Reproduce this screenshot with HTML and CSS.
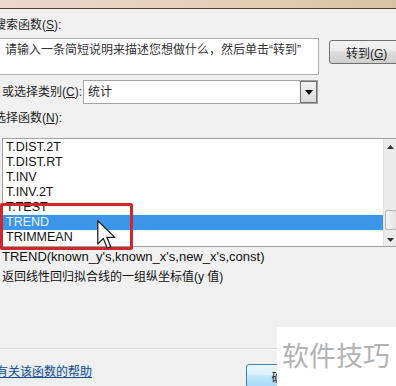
FILE: index.html
```html
<!DOCTYPE html>
<html lang="zh-CN">
<head>
  <meta charset="UTF-8">
  <title>插入函数</title>
  <link rel="stylesheet" href="styles.css">
</head>
<body>
  <div class="titlebar"></div>

  <div class="dialog">
    <label class="lbl lbl-search">搜索函数(<u>S</u>):</label>
    <div class="search-row">
      <div class="search-box">请输入一条简短说明来描述您想做什么，然后单击“转到”</div>
      <button class="btn">转到(<u>G</u>)</button>
    </div>

    <div class="cat-row">
      <label class="lbl lbl-cat">或选择类别(<u>C</u>):</label>
      <div class="select">
        <span class="select-text">统计</span>
        <span class="select-drop"><svg width="8" height="5" viewBox="0 0 8 5"><path d="M0 0H8L4 5Z" fill="#000"/></svg></span>
      </div>
    </div>

    <label class="lbl lbl-func">选择函数(<u>N</u>):</label>
    <div class="list">
      <ul class="items">
        <li>T.DIST.2T</li>
        <li>T.DIST.RT</li>
        <li>T.INV</li>
        <li>T.INV.2T</li>
        <li>T.TEST</li>
        <li class="selected">TREND</li>
        <li>TRIMMEAN</li>
      </ul>
      <div class="scrollbar">
        <svg width="7" height="4" viewBox="0 0 7 4"><path d="M0 4H7L3.5 0Z" fill="#333"/></svg>
        <div class="thumb"></div>
        <svg width="7" height="4" viewBox="0 0 7 4"><path d="M0 0H7L3.5 4Z" fill="#333"/></svg>
      </div>

      <!-- annotation over the list -->
      <div class="mark"></div>
      <svg class="cursor" width="19" height="29" viewBox="0 0 13 20">
        <path d="M0.5 0.5V16.5L4.3 12.8L7 19.3L9.4 18.3L6.8 12H12.2Z" fill="#fff" stroke="#222" stroke-width="0.9" stroke-linejoin="round"/>
      </svg>
    </div>

    <p class="syntax">TREND(known_y's,known_x's,new_x's,const)</p>
    <p class="desc">返回线性回归拟合线的一组纵坐标值(y 值)</p>

    <div class="sep"></div>

    <div class="footer">
      <a class="help" href="#">有关该函数的帮助</a>
      <div class="actions">
        <button class="btn btn-default">确定</button>
        <button class="btn">取消</button>
      </div>
    </div>
  </div>

  <div class="watermark">软件技巧</div>
</body>
</html>
```

FILE: styles.css
```css
body {
  margin: 0;
  width: 396px;
  height: 386px;
  overflow: hidden;
  position: relative;
  background-color: #f0f0f0;
  font-family: "Liberation Sans", "Noto Sans CJK SC", sans-serif;
  font-size: 12px;
  color: #1e1e1e;
}

.titlebar {
  height: 8px;
  background: linear-gradient(to right, #ead7ca, #e6cfb9 55%, #d8c2a3);
  border-bottom: 1px solid #4b4038;
}

.dialog {
  width: 410px;
  margin-left: -6px;
}

.lbl {
  display: block;
  line-height: 16px;
  white-space: nowrap;
}

.lbl-search {
  margin-top: 8px;
}

.search-row {
  display: flex;
  align-items: flex-start;
  gap: 10px;
  margin-top: 5px;
  margin-left: 5px;
}

.search-box {
  width: 311px;
  height: 31px;
  padding: 3px 3px 1px 5px;
  background-color: #fff;
  border: 1px solid #abadb3;
  line-height: 16px;
  color: #333;
  white-space: nowrap;
  overflow: hidden;
}

.btn {
  width: 75px;
  height: 24px;
  padding: 0;
  font-family: inherit;
  font-size: 12px;
  color: #1e1e1e;
  border: 1px solid #707070;
  border-radius: 3px;
  background: linear-gradient(#f2f2f2, #ebebeb 45%, #dddddd 50%, #cfcfcf);
}

.search-row .btn {
  margin-top: 2px;
}

.cat-row {
  display: flex;
  align-items: center;
  margin-top: 5px;
  margin-left: 8px;
}

.lbl-cat {
  width: 81px;
}

.select {
  display: flex;
  justify-content: space-between;
  width: 233px;
  height: 22px;
  background-color: #fff;
  border: 1px solid #a3a3a3;
}

.select-text {
  padding-left: 4px;
  line-height: 22px;
}

.select-drop {
  display: flex;
  align-items: center;
  justify-content: center;
  width: 15px;
  border: 1px solid #707070;
  background: linear-gradient(#f3f3f3, #dcdcdc);
}

.lbl-func {
  margin-top: 6px;
}

.list {
  position: relative;
  display: flex;
  width: 394px;
  height: 107px;
  margin-top: 12px;
  margin-left: 8px;
  background-color: #fff;
  border: 1px solid #a0a0a0;
}

.items {
  flex: 1;
  margin: 0;
  padding: 1px 0 0;
  list-style: none;
  font-size: 12.5px;
}

.items li {
  height: 15px;
  line-height: 15px;
  padding-left: 3px;
  color: #111;
}

.items .selected {
  background-color: #3d95ea;
  color: #eaf6ff;
}

.scrollbar {
  display: flex;
  flex-direction: column;
  align-items: center;
  width: 13px;
  padding: 6px 0 4px;
  background-color: #ebebeb;
  border-left: 1px solid #e2e2e2;
}

.thumb {
  width: 10px;
  height: 18px;
  margin: 61px 0 8px;
  border: 1px solid #b4b4b4;
  border-radius: 2px;
  background: linear-gradient(to right, #f6f6f6, #e2e2e2);
}

.mark {
  position: absolute;
  left: -3px;
  top: 64px;
  width: 127px;
  height: 41px;
  border: 3px solid #d3262b;
  border-radius: 2px;
}

.cursor {
  position: absolute;
  left: 94px;
  top: 81px;
}

.syntax,
.desc {
  margin: 0;
  margin-left: 8px;
  line-height: 20px;
  white-space: nowrap;
  color: #111;
}

.syntax {
  font-size: 13px;
}

.sep {
  height: 1px;
  margin-top: 61px;
  background-color: #d5d5d5;
  border-bottom: 1px solid #fbfbfb;
}

.footer {
  display: flex;
  justify-content: space-between;
  align-items: flex-start;
  margin-top: 14px;
}

.help {
  margin-left: 2px;
  line-height: 16px;
  color: #1f4c86;
  text-decoration: underline;
  text-shadow: 0 0 3px #b5def7;
}

.actions {
  display: flex;
  gap: 8px;
}

.btn-default {
  border-color: #3c7fb1;
  background: linear-gradient(#eaf6fd, #d9f0fc 45%, #bee6fd 50%, #a7d9f5);
}

.watermark {
  position: absolute;
  left: 277px;
  top: 327px;
  width: 119px;
  height: 59px;
  padding-left: 5px;
  background-color: #fff;
  font-family: "Noto Sans CJK SC", sans-serif;
  font-size: 27px;
  line-height: 56px;
  color: #b3b3b3;
  box-sizing: border-box;
}
```
